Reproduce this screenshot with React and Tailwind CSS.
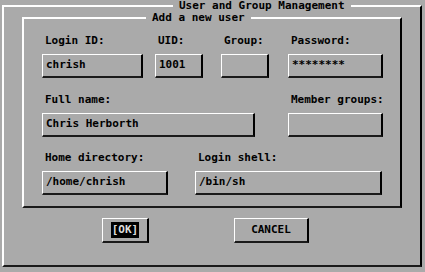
import React from 'react';

const font = { fontFamily: '"DejaVu Sans Mono", "Liberation Mono", monospace' };

const Field = ({ label, value, className, mt = '' }) => (
  <div className={`flex flex-col ${className} ${mt}`}>
    <span className="h-[12px] leading-[12px] pl-[3px] whitespace-nowrap">{label}</span>
    <div className="mt-[7px] h-[24px] border-t border-l border-white border-r-2 border-b-2 border-r-black border-b-[#1a1a1a] pl-[3px] flex items-center">
      {value}
    </div>
  </div>
);

const Button = ({ children, className }) => (
  <button className={`h-[25px] flex items-center justify-center border-t border-l border-white border-r-2 border-b-2 border-r-black border-b-[#1a1a1a] font-bold text-[11px] ${className}`}>
    {children}
  </button>
);

export default function App() {
  return (
    <div className="w-[425px] h-[272px] bg-[#aaaaaa] pl-[2px] overflow-hidden text-black font-bold text-[11px]" style={font}>
      <fieldset className="w-[420px] h-[267px] border-t-2 border-l-2 border-white border-r-2 border-b-2 border-r-black border-b-[#1a1a1a]">
        <legend className="ml-[169px] px-[6px] leading-[12px]">User and Group Management</legend>

        <fieldset className="ml-[18px] w-[380px] border-t-2 border-l-2 border-white border-r-2 border-b-2 border-r-black border-b-[#1a1a1a] pl-[18px] pt-[11px] pb-[11px]">
          <legend className="ml-[104px] px-[6px] leading-[12px]">Add a new user</legend>

          <div className="flex">
            <Field label="Login ID:" value="chrish" className="w-[101px]" />
            <Field label="UID:" value="1001" className="w-[48px] ml-[12px]" />
            <Field label="Group:" value="" className="w-[48px] ml-[18px]" />
            <Field label="Password:" value="********" className="w-[95px] ml-[19px]" />
          </div>

          <div className="flex mt-[16px]">
            <Field label="Full name:" value="Chris Herborth" className="w-[213px]" />
            <Field label="Member groups:" value="" className="w-[95px] ml-[33px]" />
          </div>

          <div className="flex mt-[15px]">
            <Field label="Home directory:" value="/home/chrish" className="w-[126px]" />
            <Field label="Login shell:" value="/bin/sh" className="w-[187px] ml-[27px]" />
          </div>
        </fieldset>

        <div className="flex mt-[10px]">
          <Button className="w-[47px] ml-[98px]">
            <span className="bg-black text-[#dddddd] px-px">[OK]</span>
          </Button>
          <Button className="w-[75px] ml-[85px]">CANCEL</Button>
        </div>
      </fieldset>
    </div>
  );
}
